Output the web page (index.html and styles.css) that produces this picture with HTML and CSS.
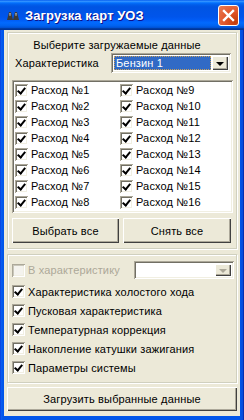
FILE: index.html
```html
<!DOCTYPE html>
<html>
<head>
<meta charset="utf-8">
<link rel="stylesheet" href="styles.css">
</head>
<body>
<div class="window">
  <div class="titlebar">
    <svg class="app-icon" width="13" height="9" viewBox="0 0 13 9">
      <path d="M0 9 L2 1 L4 1 L6 9 Z" fill="#3a3a3a"/>
      <path d="M6 9 L8 1 L10 1 L12 9 Z" fill="#3a3a3a"/>
      <path d="M2 2 L4 2 L3.5 5 L2.5 5 Z" fill="#9a9a9a"/>
      <path d="M8 2 L10 2 L9.5 5 L8.5 5 Z" fill="#9a9a9a"/>
    </svg>
    <span class="title">Загрузка карт УОЗ</span>
    <div class="close">
      <svg width="21" height="21" viewBox="0 0 21 21">
        <path d="M6 6 L15 15 M15 6 L6 15" stroke="#fff" stroke-width="2.4" stroke-linecap="square"/>
      </svg>
    </div>
  </div>
  <div class="client">
    <div class="group g1">
      <div class="heading">Выберите загружаемые данные</div>
      <div class="char-row">
        <span class="label">Характеристика</span>
        <div class="combo">
          <div class="combo-field"><span class="sel">Бензин 1</span></div>
          <div class="combo-btn"><span class="arrow"></span></div>
        </div>
      </div>
      <div class="checklist">
        <div class="ci"><span class="box checked"></span>Расход №1</div>
        <div class="ci"><span class="box checked"></span>Расход №2</div>
        <div class="ci"><span class="box checked"></span>Расход №3</div>
        <div class="ci"><span class="box checked"></span>Расход №4</div>
        <div class="ci"><span class="box checked"></span>Расход №5</div>
        <div class="ci"><span class="box checked"></span>Расход №6</div>
        <div class="ci"><span class="box checked"></span>Расход №7</div>
        <div class="ci"><span class="box checked"></span>Расход №8</div>
        <div class="ci"><span class="box checked"></span>Расход №9</div>
        <div class="ci"><span class="box checked"></span>Расход №10</div>
        <div class="ci"><span class="box checked"></span>Расход №11</div>
        <div class="ci"><span class="box checked"></span>Расход №12</div>
        <div class="ci"><span class="box checked"></span>Расход №13</div>
        <div class="ci"><span class="box checked"></span>Расход №14</div>
        <div class="ci"><span class="box checked"></span>Расход №15</div>
        <div class="ci"><span class="box checked"></span>Расход №16</div>
      </div>
      <div class="btn-row">
        <div class="btn half">Выбрать все</div>
        <div class="btn half wide">Снять все</div>
      </div>
    </div>
    <div class="group g2">
      <div class="into-row">
        <div class="cb disabled"><span class="box"></span>В характеристику</div>
        <div class="combo small disabled">
          <div class="combo-field"></div>
          <div class="combo-btn"><span class="arrow"></span></div>
        </div>
      </div>
      <div class="cb"><span class="box checked"></span>Характеристика холостого хода</div>
      <div class="cb"><span class="box checked"></span>Пусковая характеристика</div>
      <div class="cb"><span class="box checked"></span>Температурная коррекция</div>
      <div class="cb"><span class="box checked"></span>Накопление катушки зажигания</div>
      <div class="cb"><span class="box checked"></span>Параметры системы</div>
    </div>
    <div class="btn big">Загрузить выбранные данные</div>
  </div>
</div>
</body>
</html>
```

FILE: styles.css
```css
* { box-sizing: border-box; }
html, body { margin: 0; padding: 0; }
body {
  width: 244px;
  height: 420px;
  overflow: hidden;
  font-family: "Liberation Sans", Arial, sans-serif;
  font-size: 11px;
  letter-spacing: 0.15px;
  color: #000;
  background: #0055ea;
}
.window {
  width: 244px;
  height: 420px;
  display: flex;
  flex-direction: column;
  background: linear-gradient(to right, #0831d9 0, #0a5ef0 1px, #0055ea 3px, #0055ea 240px, #0a4bd8 243px, #00138c 244px);
}
.titlebar {
  height: 30px;
  flex: none;
  display: flex;
  align-items: center;
  padding-left: 7px;
  background: linear-gradient(to bottom, #0058ee 0%, #3593ff 4%, #288eff 6%, #127dff 8%, #036ffc 10%, #0262ee 14%, #0057e5 20%, #0054e3 24%, #0055eb 56%, #005bf5 66%, #026afe 76%, #0062ef 86%, #0052d6 92%, #0040ab 94%, #003092 100%);
}
.app-icon { flex: none; margin-top: 1px; }
.title {
  margin-left: 5px;
  color: #fff;
  font-weight: bold;
  font-size: 13px;
  text-shadow: 1px 1px #0f1089;
  letter-spacing: 0.1px;
}
.close {
  margin-left: auto;
  margin-right: 5px;
  width: 21px;
  height: 21px;
  border: 1px solid #fff;
  border-radius: 3px;
  background: radial-gradient(circle at 85% 85%, #c23c0a 0, #e0552a 45%, #ea7c55 100%);
  display: flex;
  align-items: center;
  justify-content: center;
}
.close svg { margin: -1px; }
.client {
  flex: 1;
  margin: 0 4px 4px 4px;
  background: #ece9d8;
  padding: 2px 0 0 3px;
  display: flex;
  flex-direction: column;
}
.group {
  width: 230px;
  border: 1px solid #d0d0bf;
  box-shadow: inset 1px 1px #fff, 1px 1px #fff;
  flex: none;
}
.g1 { height: 217px; }
.g2 { height: 129px; margin-top: 5px; }
.heading {
  margin-top: 5px;
  height: 14px;
  line-height: 14px;
  text-align: center;
  padding-right: 10px;
}
.char-row {
  margin-top: 1px;
  height: 20px;
  display: flex;
  align-items: center;
  padding-left: 7px;
}
.combo {
  margin-left: auto;
  margin-right: 5px;
  width: 120px;
  height: 20px;
  display: flex;
  padding: 2px;
  background: #fff;
  box-shadow: inset 1px 1px #aca899, inset -1px -1px #fff, inset 2px 2px #716f64, inset -2px -2px #f1efe2;
}
.combo-field {
  flex: 1;
  padding: 1px;
}
.sel {
  display: block;
  height: 100%;
  background: #316ac5;
  color: #fff;
  outline: 1px dotted #c8a05a;
  outline-offset: -1px;
  line-height: 14px;
  padding-left: 2px;
}
.combo-btn {
  width: 16px;
  margin: 1px 1px 1px 0;
  background: #ece9d8;
  box-shadow: inset 1px 1px #fff, inset -1px -1px #404040, inset -2px -2px #aca899;
  display: flex;
  align-items: center;
  justify-content: center;
}
.arrow {
  width: 0;
  height: 0;
  border-left: 4px solid transparent;
  border-right: 4px solid transparent;
  border-top: 4px solid #000;
  margin-top: 1px;
}
.combo.small {
  width: 100px;
  height: 18px;
  margin-right: 2px;
}
.combo.disabled .arrow { border-top-color: #aca899; }
.checklist {
  margin: 7px 0 0 4px;
  width: 221px;
  height: 133px;
  padding: 2px 0 0 3px;
  background: #fff;
  box-shadow: inset 1px 1px #aca899, inset -1px -1px #fff, inset 2px 2px #716f64, inset -2px -2px #f1efe2;
  display: grid;
  grid-template-columns: 105px 105px;
  grid-template-rows: repeat(8, 16px);
  grid-auto-flow: column;
}
.ci, .cb {
  display: flex;
  align-items: center;
  white-space: nowrap;
}
.box {
  flex: none;
  width: 13px;
  height: 13px;
  margin-right: 3px;
  background: #fff;
  box-shadow: inset 1px 1px #aca899, inset -1px -1px #fff, inset 2px 2px #716f64, inset -2px -2px #f1efe2;
  position: relative;
}
.box.checked::after {
  content: "";
  position: absolute;
  left: 4px;
  top: 2px;
  width: 3px;
  height: 6px;
  border-right: 2px solid #000;
  border-bottom: 2px solid #000;
  transform: rotate(40deg);
}
.btn-row {
  margin: 5px 0 0 4px;
  display: flex;
  gap: 4px;
}
.btn {
  height: 25px;
  display: flex;
  align-items: center;
  justify-content: center;
  background: #ece9d8;
  box-shadow: inset 1px 1px #fff, inset -1px -1px #404040, inset -2px -2px #aca899;
}
.btn.half { width: 107px; }
.btn.wide { width: 108px; }
.into-row {
  margin-top: 6px;
  height: 18px;
  display: flex;
  align-items: center;
  padding-left: 4px;
}
.cb.disabled { color: #aca899; }
.cb.disabled .box { background: #f4f3ee; box-shadow: inset 1px 1px #aca899, inset -1px -1px #fff, inset 2px 2px #c9c7ba, inset -2px -2px #f1efe2; }
.g2 > .cb {
  height: 19px;
  padding-left: 4px;
}
.g2 > .into-row + .cb { margin-top: 3px; }
.btn.big {
  margin-top: 4px;
  width: 230px;
  height: 24px;
  flex: none;
}
```
